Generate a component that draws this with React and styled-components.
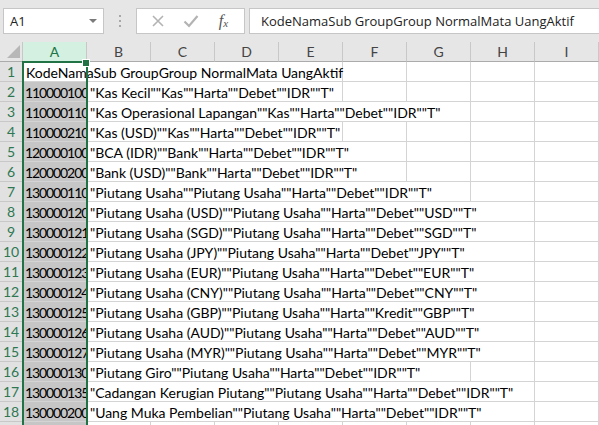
import React from "react"
import styled, { createGlobalStyle } from "styled-components"

const GlobalStyle = createGlobalStyle`
  html, body {
    margin: 0;
    padding: 0;
    background: #ffffff;
    overflow: hidden;
  }
`

const COLS = ["A", "B", "C", "D", "E", "F", "G", "H", "I"]

const rows = [
  { a: "KodeNamaSub GroupGroup NormalMata UangAktif", aSpan: 5 },
  { a: "1100001000", b: '"Kas Kecil""Kas""Harta""Debet""IDR""T"', span: 4 },
  { a: "1100001100", b: '"Kas Operasional Lapangan""Kas""Harta""Debet""IDR""T"', span: 6 },
  { a: "1100002100", b: '"Kas (USD)""Kas""Harta""Debet""IDR""T"', span: 4 },
  { a: "1200001000", b: '"BCA (IDR)""Bank""Harta""Debet""IDR""T"', span: 5 },
  { a: "1200002000", b: '"Bank (USD)""Bank""Harta""Debet""IDR""T"', span: 5 },
  { a: "1300001100", b: '"Piutang Usaha""Piutang Usaha""Harta""Debet""IDR""T"', span: 6 },
  { a: "1300001200", b: '"Piutang Usaha (USD)""Piutang Usaha""Harta""Debet""USD""T"', span: 7 },
  { a: "1300001210", b: '"Piutang Usaha (SGD)""Piutang Usaha""Harta""Debet""SGD""T"', span: 7 },
  { a: "1300001220", b: '"Piutang Usaha (JPY)""Piutang Usaha""Harta""Debet""JPY""T"', span: 7 },
  { a: "1300001230", b: '"Piutang Usaha (EUR)""Piutang Usaha""Harta""Debet""EUR""T"', span: 7 },
  { a: "1300001240", b: '"Piutang Usaha (CNY)""Piutang Usaha""Harta""Debet""CNY""T"', span: 7 },
  { a: "1300001250", b: '"Piutang Usaha (GBP)""Piutang Usaha""Harta""Kredit""GBP""T"', span: 7 },
  { a: "1300001260", b: '"Piutang Usaha (AUD)""Piutang Usaha""Harta""Debet""AUD""T"', span: 7 },
  { a: "1300001270", b: '"Piutang Usaha (MYR)""Piutang Usaha""Harta""Debet""MYR""T"', span: 7 },
  { a: "1300001300", b: '"Piutang Giro""Piutang Usaha""Harta""Debet""IDR""T"', span: 6 },
  { a: "1300001350", b: '"Cadangan Kerugian Piutang""Piutang Usaha""Harta""Debet""IDR""T"', span: 7 },
  { a: "1300002000", b: '"Uang Muka Pembelian""Piutang Usaha""Harta""Debet""IDR""T"', span: 7 },
  { a: "", b: "", span: 1 },
]

export default function App() {
  return (
    <Window>
      <GlobalStyle />
      <FormulaBar>
        <NameBox>
          <NameText>A1</NameText>
          <DropArrow />
        </NameBox>
        <Grip>
          <Dot />
          <Dot />
          <Dot />
        </Grip>
        <ActionBox>
          <ActionIcon>
            <svg width="14" height="14" viewBox="0 0 14 14">
              <path d="M2 2 L12 12 M12 2 L2 12" stroke="#b3b3b3" strokeWidth="1.6" fill="none" />
            </svg>
          </ActionIcon>
          <ActionIcon>
            <svg width="16" height="14" viewBox="0 0 16 14">
              <path d="M1.5 7.5 L6 12 L14.5 2" stroke="#b3b3b3" strokeWidth="2.2" fill="none" />
            </svg>
          </ActionIcon>
          <FxIcon>
            f<sub>x</sub>
          </FxIcon>
        </ActionBox>
        <FormulaInput>KodeNamaSub GroupGroup NormalMata UangAktif</FormulaInput>
      </FormulaBar>

      <SheetWrap>
        <Sheet>
          <Corner>
            <svg width="13" height="13" viewBox="0 0 13 13">
              <polygon points="13,0 13,13 0,13" fill="#b7b7b7" />
            </svg>
          </Corner>
          {COLS.map((c) => (
            <ColHead key={c} $selected={c === "A"}>
              {c}
            </ColHead>
          ))}

          {rows.map((r, i) => (
            <React.Fragment key={i}>
              <RowHead>{i + 1}</RowHead>
              {r.aSpan ? (
                <Cell $span={r.aSpan}>{r.a}</Cell>
              ) : (
                <>
                  <Cell $clip $shade>
                    {r.a}
                  </Cell>
                  <Cell $span={r.span}>{r.b}</Cell>
                </>
              )}
              {Array.from({ length: 9 - (r.aSpan ? r.aSpan : 1 + r.span) }).map((_, j) => (
                <Cell key={j} />
              ))}
            </React.Fragment>
          ))}
        </Sheet>
        <Selection>
          <Handle />
        </Selection>
      </SheetWrap>
    </Window>
  )
}

const Window = styled.div`
  width: 599px;
  height: 425px;
  overflow: hidden;
  background: #e6e6e6;
  font-family: "Lato", "Liberation Sans", sans-serif;
`

const FormulaBar = styled.div`
  display: flex;
  align-items: center;
  height: 42px;
  padding: 0 0 0 3px;
  box-sizing: border-box;
`

const NameBox = styled.div`
  display: flex;
  align-items: center;
  justify-content: space-between;
  width: 101px;
  height: 26px;
  box-sizing: border-box;
  background: #ffffff;
  border: 1px solid #c6c6c6;
  padding: 0 6px 0 6px;
`

const NameText = styled.span`
  font-family: "Open Sans", "Noto Sans", sans-serif;
  font-size: 13px;
  color: #222;
`

const DropArrow = styled.span`
  width: 0;
  height: 0;
  border-left: 4px solid transparent;
  border-right: 4px solid transparent;
  border-top: 4px solid #7a7a7a;
`

const Grip = styled.div`
  display: flex;
  flex-direction: column;
  gap: 3px;
  width: 32px;
  align-items: center;
`

const Dot = styled.span`
  width: 2px;
  height: 2px;
  background: #a8a8a8;
`

const ActionBox = styled.div`
  display: flex;
  align-items: center;
  justify-content: space-around;
  width: 109px;
  height: 26px;
  box-sizing: border-box;
  background: #ffffff;
  border: 1px solid #c6c6c6;
  padding: 0 4px;
`

const ActionIcon = styled.span`
  display: flex;
  align-items: center;
  justify-content: center;
  width: 24px;
`

const FxIcon = styled.span`
  font-family: "Liberation Serif", serif;
  font-style: italic;
  font-size: 16px;
  color: #555;
  width: 24px;
  text-align: center;

  sub {
    font-size: 11px;
    vertical-align: -1px;
  }
`

const FormulaInput = styled.div`
  flex: 1;
  margin-left: 4px;
  height: 26px;
  box-sizing: border-box;
  background: #ffffff;
  border: 1px solid #c6c6c6;
  border-right: none;
  padding: 0 0 0 11px;
  display: flex;
  align-items: center;
  font-family: "Open Sans", "Noto Sans", sans-serif;
  font-size: 13px;
  color: #222;
  white-space: nowrap;
  overflow: hidden;
`

const SheetWrap = styled.div`
  position: relative;
`

const Sheet = styled.div`
  display: grid;
  grid-template-columns: 23px repeat(9, 64px);
  grid-auto-rows: 20px;
  background: #ffffff;
`

const Corner = styled.div`
  background: #e6e6e6;
  border-right: 1px solid #c8c8c8;
  border-bottom: 1px solid #ababab;
  box-sizing: border-box;
  display: flex;
  align-items: flex-end;
  justify-content: flex-end;
  padding: 0 2px 3px 0;
`

const ColHead = styled.div`
  background: ${(p) => (p.$selected ? "#d3f0e0" : "#e6e6e6")};
  color: ${(p) => (p.$selected ? "#217346" : "#444")};
  border-right: 1px solid #c8c8c8;
  border-bottom: 1px solid ${(p) => (p.$selected ? "#217346" : "#ababab")};
  box-sizing: border-box;
  display: flex;
  align-items: center;
  justify-content: center;
  font-size: 14px;
`

const RowHead = styled.div`
  background: #e1e1e1;
  color: #2d7852;
  border-right: 1px solid #c8c8c8;
  border-bottom: 1px solid #c8c8c8;
  box-sizing: border-box;
  display: flex;
  align-items: center;
  justify-content: center;
  font-size: 14px;
`

const Cell = styled.div`
  grid-column: span ${(p) => p.$span || 1};
  background: ${(p) => (p.$shade ? "#c6c6c6" : "transparent")};
  border-right: 1px solid #d4d4d4;
  border-bottom: 1px solid #d4d4d4;
  box-sizing: border-box;
  padding: 1px 0 0 ${(p) => (p.$clip ? "2px" : "3px")};
  display: flex;
  align-items: center;
  font-size: 14px;
  letter-spacing: ${(p) => (p.$clip ? "-1.1px" : "0")};
  color: #000;
  white-space: nowrap;
  overflow: ${(p) => (p.$clip ? "hidden" : "visible")};
`

const Selection = styled.div`
  position: absolute;
  left: 22px;
  top: 19px;
  width: 66px;
  height: 400px;
  box-sizing: border-box;
  border: 2px solid #217346;
  border-bottom: none;
  pointer-events: none;
`

const Handle = styled.span`
  position: absolute;
  right: -4px;
  top: -4px;
  width: 6px;
  height: 6px;
  background: #217346;
  border: 1px solid #ffffff;
`
